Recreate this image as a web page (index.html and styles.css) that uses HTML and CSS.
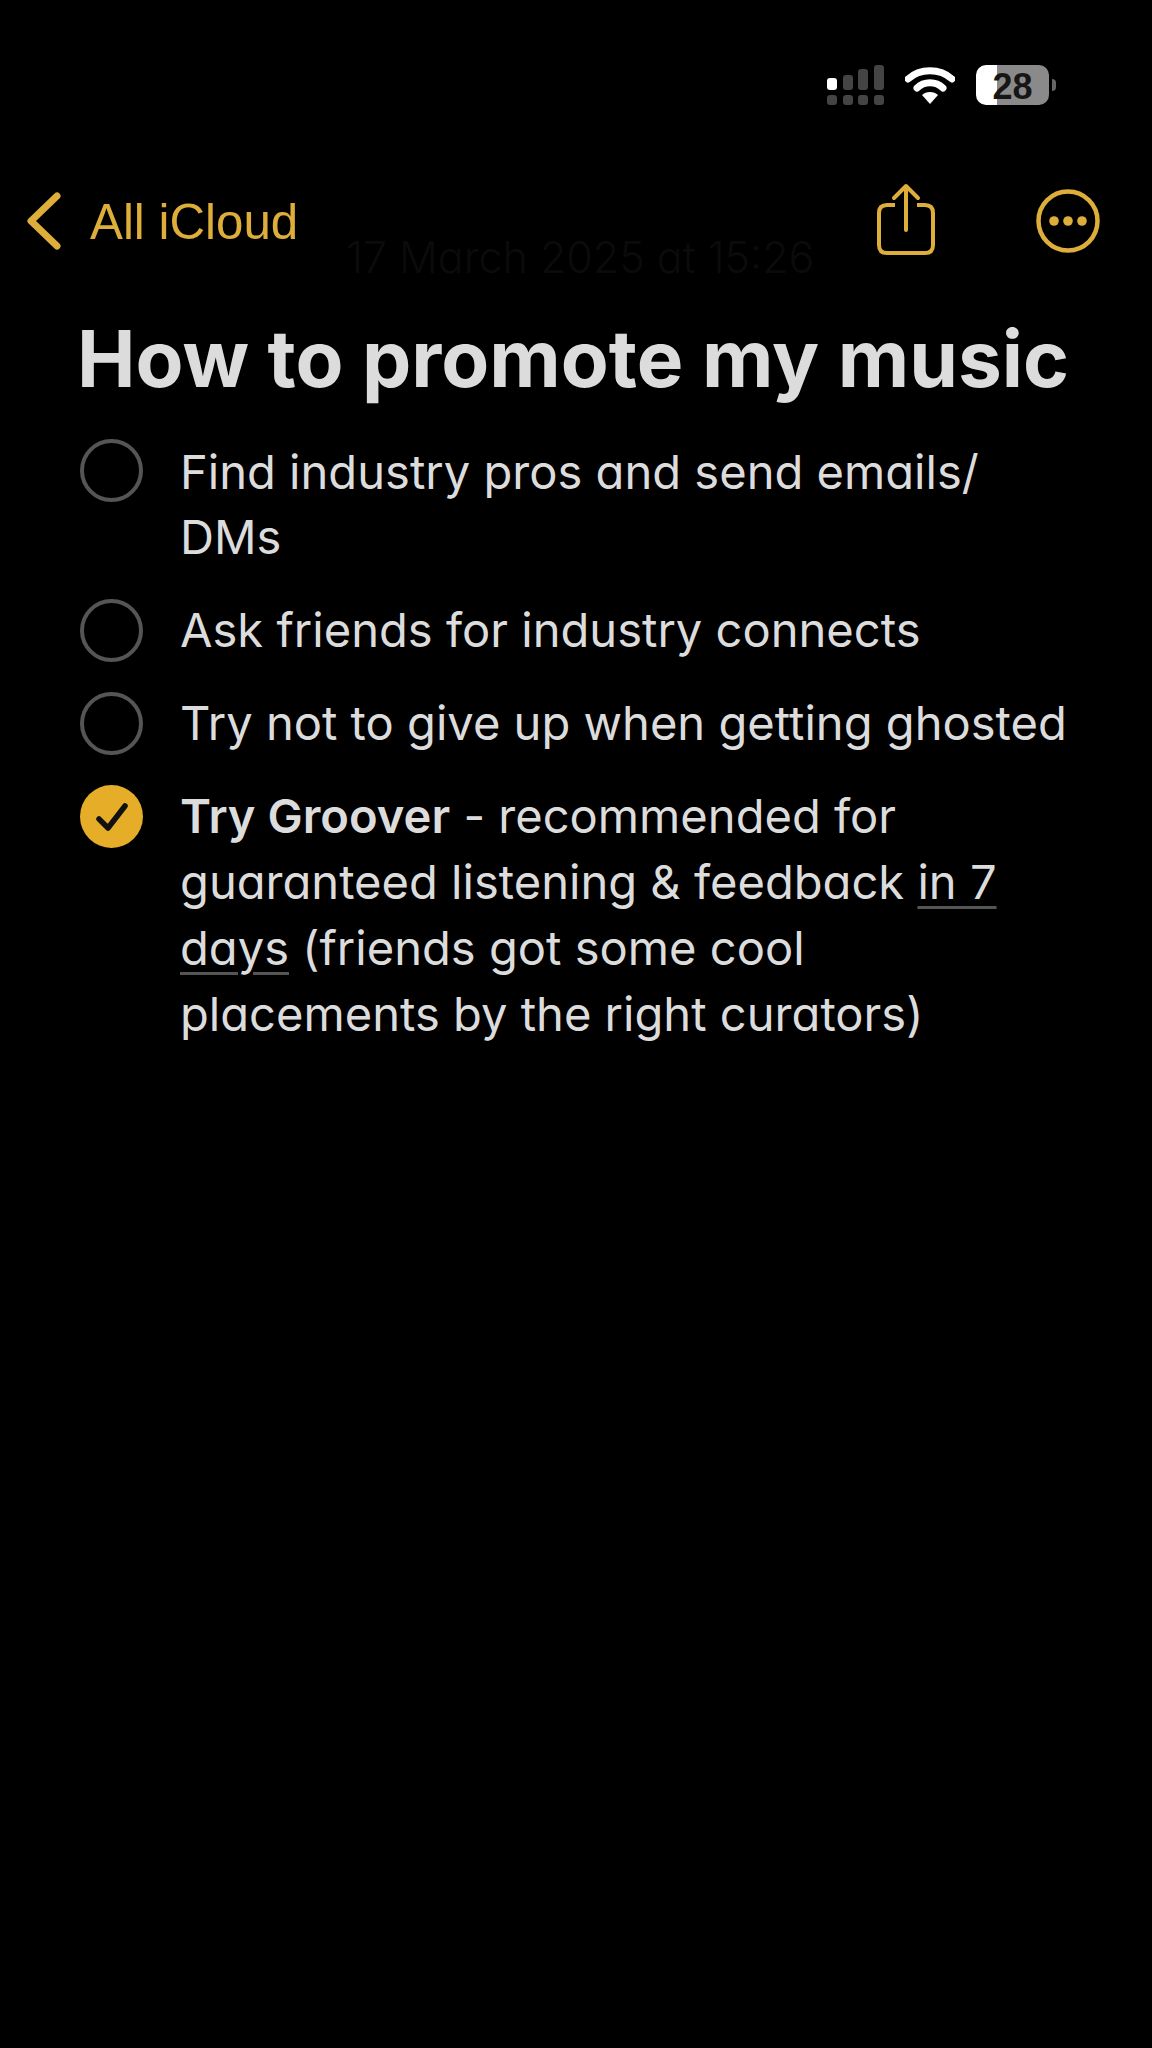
FILE: index.html
```html
<!DOCTYPE html>
<html lang="en">
<head>
    <meta charset="UTF-8">
    <meta name="viewport" content="width=device-width, initial-scale=1.0">
    <title>How to promote my music</title>
    <link rel="stylesheet" href="styles.css">
</head>
<body>
    <div class="status-bar">
        <svg class="signal" width="57" height="40" viewBox="0 0 57 40">
            <rect x="0" y="13" width="10" height="12" rx="3" fill="#fff"/>
            <rect x="16" y="10" width="10" height="15" rx="3" fill="#444"/>
            <rect x="31" y="4" width="10" height="21" rx="3" fill="#444"/>
            <rect x="47" y="0" width="10" height="25" rx="3" fill="#444"/>
            <rect x="0" y="30" width="10" height="10" rx="3" fill="#444"/>
            <rect x="16" y="30" width="10" height="10" rx="3" fill="#444"/>
            <rect x="31" y="30" width="10" height="10" rx="3" fill="#444"/>
            <rect x="47" y="30" width="10" height="10" rx="3" fill="#444"/>
        </svg>
        <svg class="wifi" width="50" height="38" viewBox="0 0 50 38">
            <path d="M3 13 C15 2 35 2 47 13" fill="none" stroke="#fff" stroke-width="7" stroke-linecap="round"/>
            <path d="M12 22 C19 15 31 15 38 22" fill="none" stroke="#fff" stroke-width="7" stroke-linecap="round"/>
            <path d="M17 29 C21 25 29 25 33 29 L25 38 Z" fill="#fff"/>
        </svg>
        <div class="battery">
            <div class="battery-body"><span class="battery-num">28</span></div>
            <div class="battery-nub"></div>
        </div>
    </div>

    <div class="nav">
        <div class="nav-back">
            <svg width="36" height="58" viewBox="0 0 36 58">
                <path d="M31 4 L5 29 L31 54" fill="none" stroke="#deae3a" stroke-width="7" stroke-linecap="round" stroke-linejoin="round"/>
            </svg>
            <span>All iCloud</span>
        </div>
        <div class="note-date">17 March 2025 at 15:26</div>
        <div class="nav-actions">
            <svg class="share-icon" width="58" height="72" viewBox="0 0 58 72">
                <path d="M18 22 H10 Q2 22 2 30 V62 Q2 70 10 70 H48 Q56 70 56 62 V30 Q56 22 48 22 H40" fill="none" stroke="#deae3a" stroke-width="4"/>
                <path d="M29 47 V3 M17 15 L29 3 L41 15" fill="none" stroke="#deae3a" stroke-width="4" stroke-linecap="round" stroke-linejoin="round"/>
            </svg>
            <svg width="64" height="64" viewBox="0 0 64 64">
                <circle cx="32" cy="32" r="29.5" fill="none" stroke="#deae3a" stroke-width="4.5"/>
                <circle cx="18" cy="32" r="4.8" fill="#deae3a"/>
                <circle cx="32" cy="32" r="4.8" fill="#deae3a"/>
                <circle cx="46" cy="32" r="4.8" fill="#deae3a"/>
            </svg>
        </div>
    </div>

    <h1 class="note-title">How to promote my music</h1>

    <ul class="checklist">
        <li class="check-item">
            <span class="circle"></span>
            <p>Find industry pros and send emails/<br>DMs</p>
        </li>
        <li class="check-item">
            <span class="circle"></span>
            <p>Ask friends for industry connects</p>
        </li>
        <li class="check-item">
            <span class="circle"></span>
            <p>Try not to give up when getting ghosted</p>
        </li>
        <li class="check-item long">
            <span class="circle done">
                <svg width="34" height="30" viewBox="0 0 34 30">
                    <path d="M4 17 L13 26 L30 4" fill="none" stroke="#111" stroke-width="5.5" stroke-linecap="round" stroke-linejoin="round"/>
                </svg>
            </span>
            <p><strong>Try Groover</strong> - recommended for<br>guaranteed listening &amp; feedback <span class="link">in 7</span><br><span class="link">days</span> (friends got some cool<br>placements by the right curators)</p>
        </li>
    </ul>
</body>
</html>
```

FILE: styles.css
```css
html, body {
    background-color: #000;
}

body {
    font-family: Inter, "Liberation Sans", sans-serif;
    font-feature-settings: "cv11";
    color: #dcdcdc;
    margin: 0;
    height: 2048px;
    overflow: hidden;
}

.status-bar {
    display: flex;
    justify-content: flex-end;
    align-items: center;
    gap: 21px;
    padding: 65px 96px 0 0;
}

.battery {
    display: flex;
    align-items: center;
    gap: 3px;
}

.battery-body {
    width: 73px;
    height: 40px;
    border-radius: 10px;
    background: linear-gradient(to right, #fff 29%, #8a8a8a 29%);
    display: flex;
    align-items: center;
    justify-content: center;
}

.battery-num {
    color: #161616;
    font-family: "Liberation Sans", sans-serif;
    font-weight: 700;
    font-size: 36px;
    line-height: 40px;
    padding-top: 3px;
}

.battery-nub {
    width: 4px;
    height: 12px;
    border-radius: 0 4px 4px 0;
    background-color: #666;
}

.nav {
    position: relative;
    display: flex;
    justify-content: space-between;
    align-items: center;
    margin-top: 78px;
    padding: 0 52px 0 26px;
    height: 72px;
}

.nav-back {
    display: flex;
    align-items: center;
    gap: 28px;
    color: #deae3a;
    font-family: "Liberation Sans", sans-serif;
    font-size: 49.3px;
    padding-top: 4px;
}

.nav-actions {
    display: flex;
    align-items: center;
    gap: 101px;
    padding-top: 3px;
}

.share-icon {
    margin-top: -3px;
}

.note-date {
    position: absolute;
    left: 346px;
    top: 48px;
    font-size: 43px;
    font-weight: 300;
    color: #0b0b0b;
}

.note-title {
    margin: 59px 0 0 77px;
    font-size: 78.3px;
    line-height: 90px;
    font-weight: 700;
    white-space: nowrap;
}

.checklist {
    list-style: none;
    margin: 35px 0 0 80px;
    padding: 0;
    display: flex;
    flex-direction: column;
    gap: 28px;
}

.check-item {
    display: flex;
    gap: 37px;
}

.check-item + .check-item .circle {
    margin-top: 2px;
}

.check-item p {
    margin: 0;
    font-size: 47.1px;
    line-height: 65px;
    white-space: nowrap;
}

.check-item.long p {
    line-height: 66px;
}

.check-item strong {
    font-weight: 600;
}

.circle {
    flex: none;
    box-sizing: border-box;
    width: 63px;
    height: 63px;
    border: 4px solid #555;
    border-radius: 50%;
    display: flex;
    align-items: center;
    justify-content: center;
}

.circle.done {
    border: none;
    background-color: #e6ad28;
}

.link {
    text-decoration: underline;
    text-decoration-color: #555;
    text-decoration-thickness: 3px;
    text-underline-offset: 7px;
}
```
